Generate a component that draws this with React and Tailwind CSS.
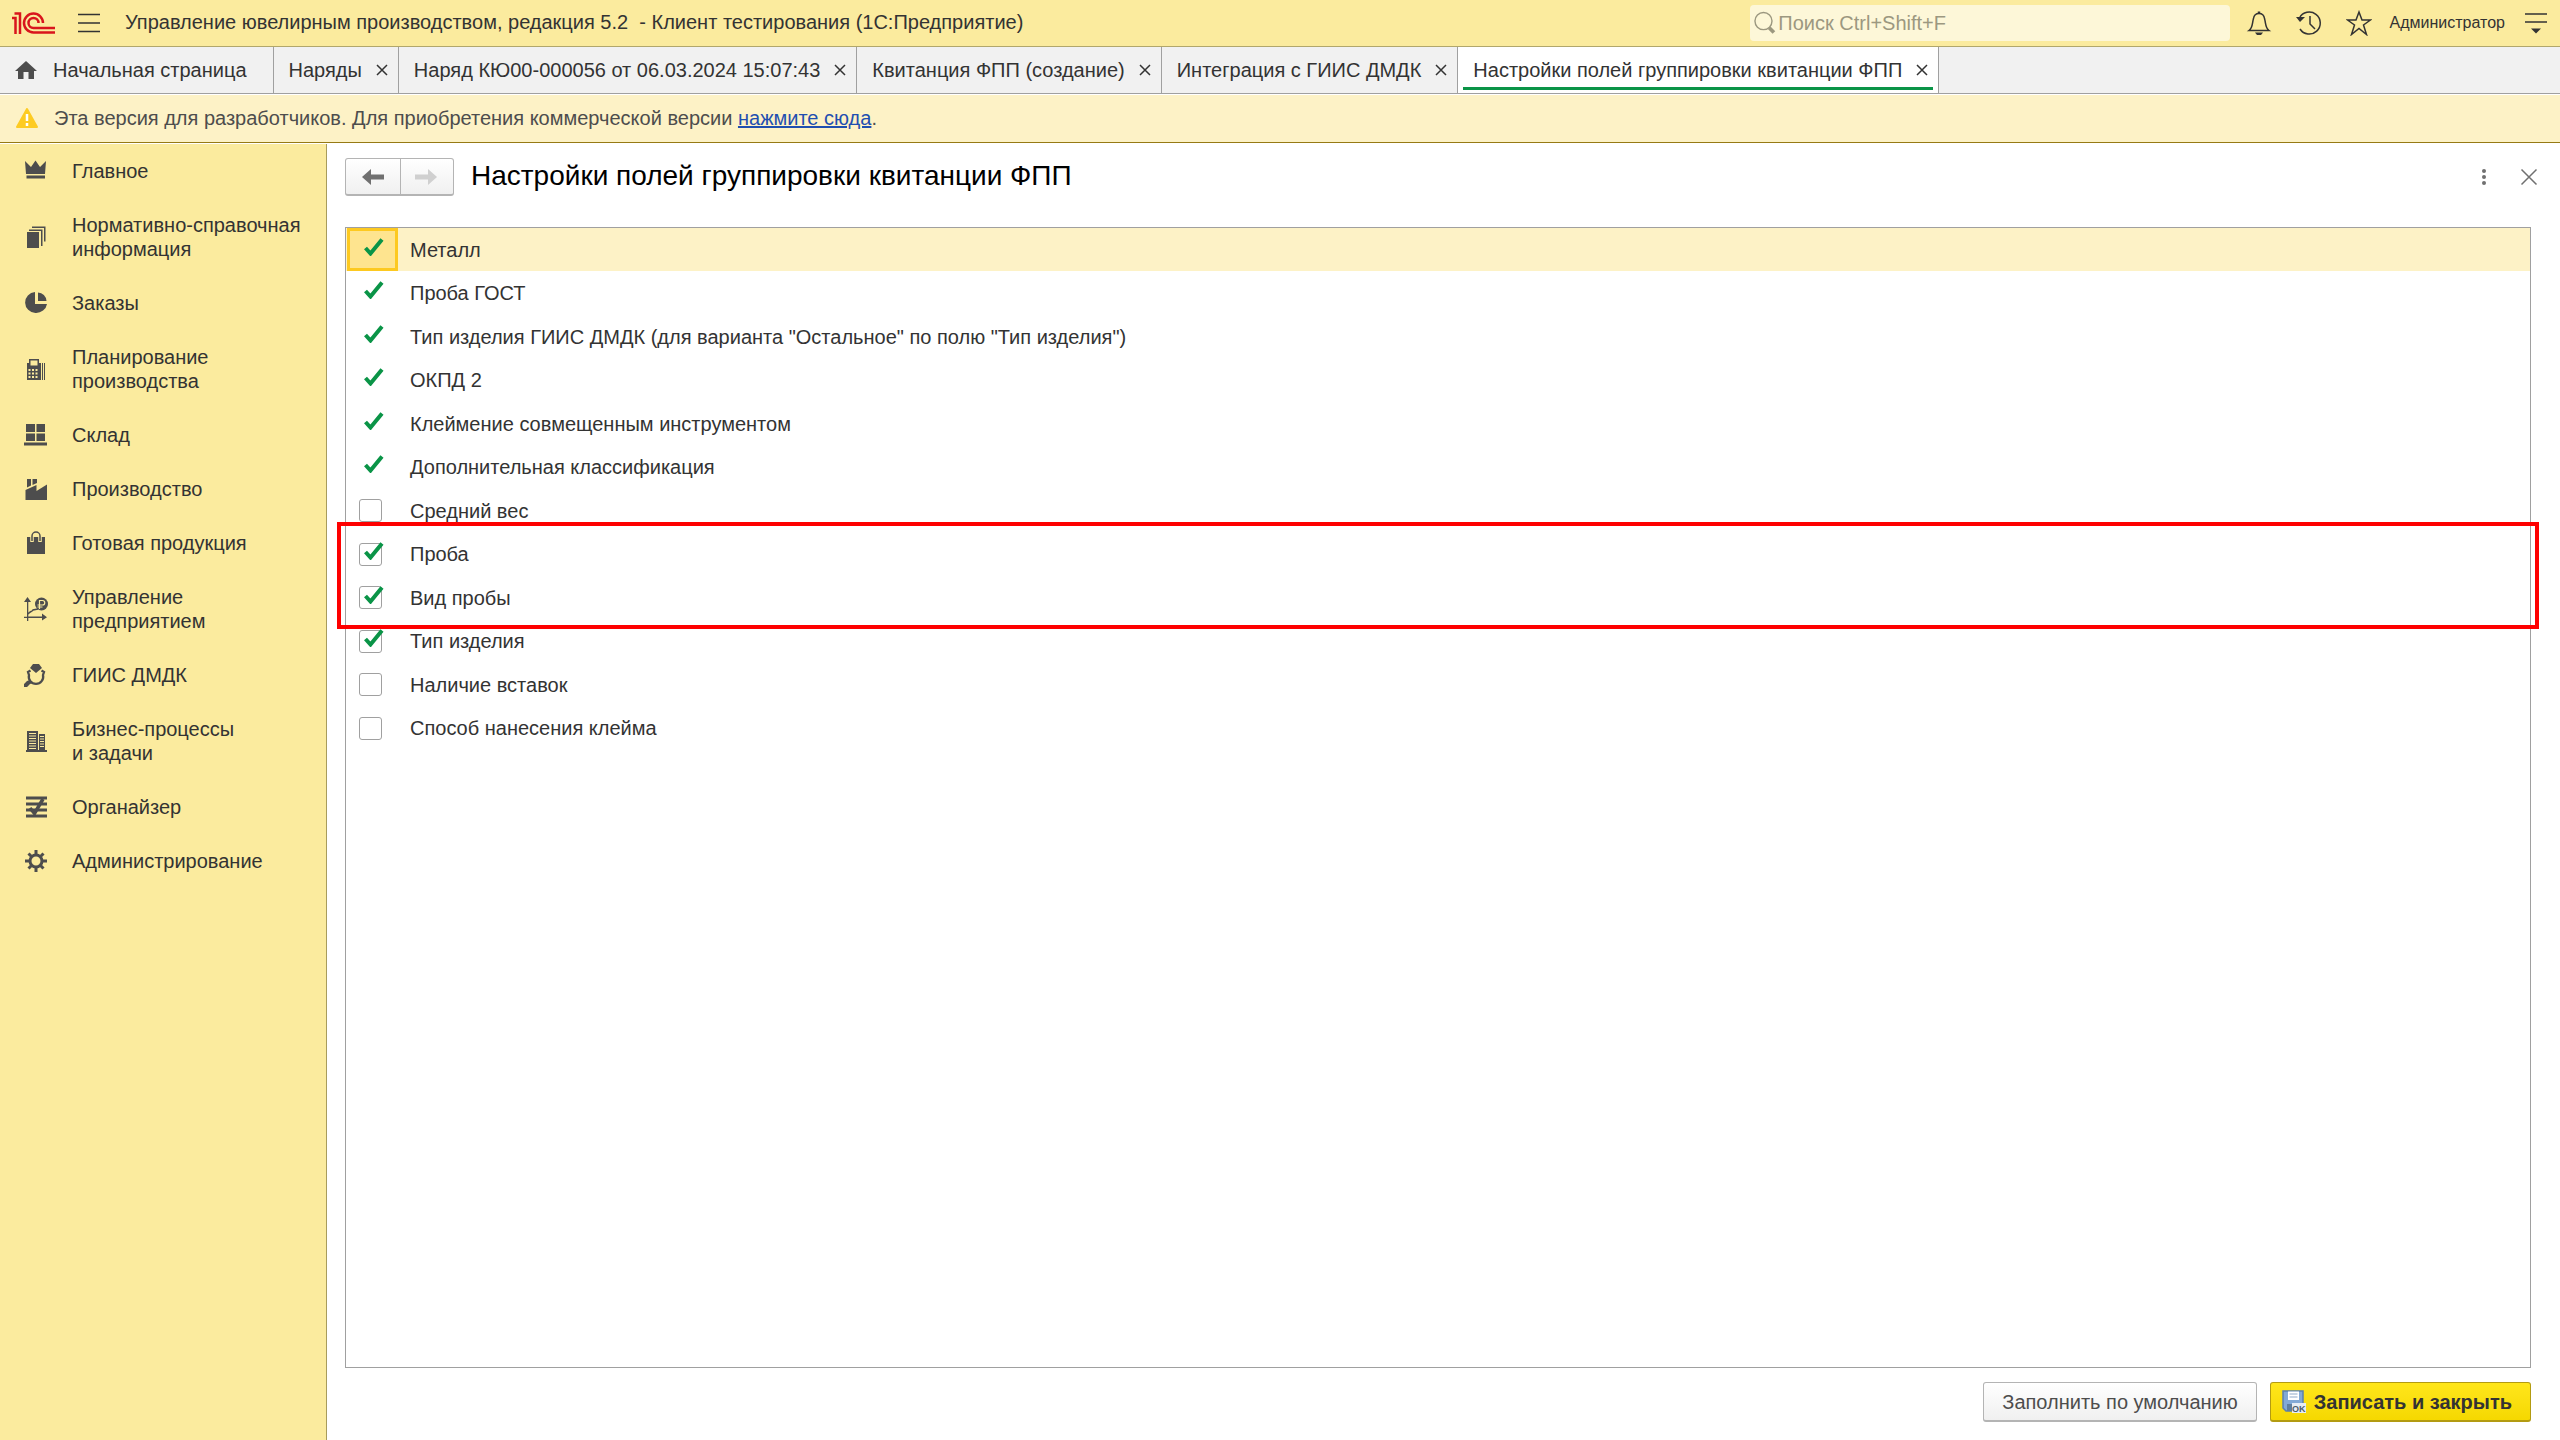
import { useState } from 'react'
import { clsx } from 'clsx'

const tabs = [
  { title: 'Наряды' },
  { title: 'Наряд КЮ00-000056 от 06.03.2024 15:07:43' },
  { title: 'Квитанция ФПП (создание)' },
  { title: 'Интеграция с ГИИС ДМДК' },
  { title: 'Настройки полей группировки квитанции ФПП', active: true }
]

const sections = [
  { label: 'Главное', icon: CrownIcon },
  { label: 'Нормативно-справочная\nинформация', icon: PagesIcon },
  { label: 'Заказы', icon: PieIcon },
  { label: 'Планирование\nпроизводства', icon: CalculatorIcon },
  { label: 'Склад', icon: WarehouseIcon },
  { label: 'Производство', icon: FactoryIcon },
  { label: 'Готовая продукция', icon: BagIcon },
  { label: 'Управление\nпредприятием', icon: FinanceIcon },
  { label: 'ГИИС ДМДК', icon: RingIcon },
  { label: 'Бизнес-процессы\nи задачи', icon: BuildingsIcon },
  { label: 'Органайзер', icon: OrganizerIcon },
  { label: 'Администрирование', icon: GearIcon }
]

// locked fields are always part of the grouping and have no box
const initialFields = [
  { name: 'Металл', checked: true, locked: true },
  { name: 'Проба ГОСТ', checked: true, locked: true },
  { name: 'Тип изделия ГИИС ДМДК (для варианта "Остальное" по полю "Тип изделия")', checked: true, locked: true },
  { name: 'ОКПД 2', checked: true, locked: true },
  { name: 'Клеймение совмещенным инструментом', checked: true, locked: true },
  { name: 'Дополнительная классификация', checked: true, locked: true },
  { name: 'Средний вес', checked: false },
  { name: 'Проба', checked: true },
  { name: 'Вид пробы', checked: true },
  { name: 'Тип изделия', checked: true },
  { name: 'Наличие вставок', checked: false },
  { name: 'Способ нанесения клейма', checked: false }
]

function SectionSvg({ children }) {
  return (
    <svg viewBox="0 0 24 24" className="size-6 shrink-0 fill-[#4d4d4d]" aria-hidden="true">
      {children}
    </svg>
  )
}

function CrownIcon() {
  return (
    <SectionSvg>
      <path d="M1 2l6 6 4.500-6.500L16 8l6-6-1 13H2zM2.500 16.500h18.500v3H2.500z" />
    </SectionSvg>
  )
}

function PagesIcon() {
  return (
    <SectionSvg>
      <path d="M3 7h12v16H3zM5 4.500h13.500V21H17V6H5zM8 1.500h13.500v15H20V3H8z" />
    </SectionSvg>
  )
}

function PieIcon() {
  return (
    <SectionSvg>
      <path d="M11 1v12h12A11 10.500 0 1 1 11 1z" />
      <path d="M14 1.500a9 9 0 0 1 8.500 8.500H14z" />
    </SectionSvg>
  )
}

function CalculatorIcon() {
  return (
    <SectionSvg>
      <path fillRule="evenodd" d="M5 2h10v4h2v17H3V6h2zM6.500 3.500v5h7v-5zM4.500 12v2h2v-2zM8 12v2h2v-2zM11.500 12v2h2v-2zM4.500 15.500v2h2v-2zM8 15.500v2h2v-2zM11.500 15.500v2h2v-2zM4.500 19v2h2v-2zM8 19v2h2v-2zM11.500 19v2h2v-2z" />
      <path d="M18 6h1v17h-1zM20 6h1v17h-1z" />
    </SectionSvg>
  )
}

function WarehouseIcon() {
  return (
    <SectionSvg>
      <path d="M2 1h9v8H2zM12.500 1H21v8h-8.500zM2 10.500h9V18H2zM12.500 10.500H21V18h-8.500zM0 19.500h23v3H0z" />
    </SectionSvg>
  )
}

function FactoryIcon() {
  return (
    <SectionSvg>
      <path d="M1.500 23V13l11-5v6L23 7.500V23zM3 2h4v6.500l-4 2zM8.500 2h4.500v4L8.500 8z" />
    </SectionSvg>
  )
}

function BagIcon() {
  return (
    <SectionSvg>
      <path d="M3 6h18v17H3z" />
      <path d="M8 11V5a4 4 0 0 1 8 0v6" fill="none" stroke="#fbeb9e" strokeWidth="3.500" />
      <path d="M8 10V5a4 4 0 0 1 8 0v5" fill="none" stroke="#4d4d4d" strokeWidth="1.500" />
    </SectionSvg>
  )
}

function FinanceIcon() {
  return (
    <SectionSvg>
      <path d="M3 5L0 5l3.500-5L7 5H4.300v14.500H18v-3l5 3.700-5 3.300v-2.500H4.300V24H3v-3H0v-1.300h3z" />
      <path d="M4 17c2-3 4-2 5-4l5-1" fill="none" stroke="#4d4d4d" strokeWidth="1.500" />
      <circle cx="17.500" cy="7" r="6.500" />
      <path d="M15.500 12V3.500h3a2 2 0 0 1 0 4.500H13.500M13.500 10h5" fill="none" stroke="#fbeb9e" strokeWidth="1.200" />
    </SectionSvg>
  )
}

function RingIcon() {
  return (
    <SectionSvg>
      <path d="M9 1h6l3 4-6 5-6-5z" />
      <path d="M6.500 7.500L4 9l1 3a7.200 7.200 0 1 0 14 0l1-3-2.500-1.500" fill="none" stroke="#4d4d4d" strokeWidth="2.300" />
      <path d="M6 17l3 3-3 1-3 3H0v-3l3-3z" />
    </SectionSvg>
  )
}

function BuildingsIcon() {
  return (
    <SectionSvg>
      <path fillRule="evenodd" d="M3 2h11v19h1V5h6v16h2v2H2v-2h1zM5 4v1h7V4zM5 6.500v1h7v-1zM5 9v1h7V9zM5 11.500v1h7v-1zM5 14v1h7v-1zM5 16.500v1h7v-1zM5 19v1h7v-1zM16 7v1h4V7zM16 9.500v1h4v-1zM16 12v1h4v-1zM16 14.500v1h4v-1zM16 17v1h4v-1z" />
    </SectionSvg>
  )
}

function OrganizerIcon() {
  return (
    <SectionSvg>
      <path d="M2 1.500h21v3H2zM2 7.500h21v3H2zM2 13.500h21v3H2zM2 19.500h21v3H2z" />
      <path d="M6 13l4.500 5.500L19 4" fill="none" stroke="#4d4d4d" strokeWidth="3.500" />
    </SectionSvg>
  )
}

function GearIcon() {
  return (
    <SectionSvg>
      <circle cx="12" cy="12" r="6" fill="none" stroke="#4d4d4d" strokeWidth="3" />
      <path
        d="M12 1v5M12 18v5M1 12h5M18 12h5M4.500 4.500L8 8M16 16l3.500 3.500M4.500 19.500L8 16M16 8l3.500-3.500"
        fill="none"
        stroke="#4d4d4d"
        strokeWidth="3"
      />
    </SectionSvg>
  )
}

function Logo() {
  return (
    <svg viewBox="0 0 44 22" className="h-[22px] w-11 fill-none stroke-[#d9151c]" strokeWidth="2.500" aria-label="1С">
      <path d="M1 6h3.500v16M3.500 1.500H9V22" />
      <path d="M32 11a9.500 9.500 0 1 0-9.500 9.500H44M27.500 11a5 5 0 1 0-5 5H44" />
    </svg>
  )
}

function CloseIcon({ className }) {
  return (
    <svg viewBox="0 0 12 12" className={clsx('fill-none', className)} aria-hidden="true">
      <path d="M1 1l10 10M11 1L1 11" />
    </svg>
  )
}

function TitleBar() {
  return (
    <header className="flex h-[47px] items-center border-b border-[#b1a76c] bg-[#fbeb9e] pr-[13px] pl-[11px]">
      <Logo />
      <button type="button" aria-label="Главное меню" className="ml-[23px]">
        <svg viewBox="0 0 22 20" className="h-5 w-[22px] stroke-[#333] stroke-[1.500]" aria-hidden="true">
          <path d="M0 1.500h22M0 10h22M0 18.500h22" />
        </svg>
      </button>
      <h1 className="ml-[25px] pb-[2px] whitespace-pre">
        Управление ювелирным производством, редакция 5.2  - Клиент тестирования (1С:Предприятие)
      </h1>
      <label className="ml-auto flex h-9 w-[480px] items-center rounded-sm bg-[#fdf7d8] pl-1">
        <svg viewBox="0 0 24 24" className="size-6 fill-none stroke-[#9c9880]" aria-hidden="true">
          <circle cx="10" cy="10" r="9" strokeWidth="1.500" />
          <path d="M16 17l5 5" strokeWidth="4" />
        </svg>
        <input
          type="search"
          aria-label="Поиск"
          placeholder="Поиск Ctrl+Shift+F"
          className="ml-[2px] w-full bg-transparent outline-none placeholder:text-[#9c9880]"
        />
      </label>
      <div className="ml-4 flex items-center gap-6 text-[#333]">
        <button type="button" aria-label="Уведомления">
          <svg viewBox="0 0 26 26" className="size-[26px] fill-none stroke-current stroke-[1.500]" aria-hidden="true">
            <path d="M3 20.500c4-3 3-7 4.500-12C8 5 10 3.500 13 3.500S18 5 18.500 8.500C20 13.500 19 17.500 23 20.500z" />
            <path d="M13 1.500v2" strokeWidth="2.500" />
            <path d="M9 22.500h8l-2 2.500h-4z" fill="currentColor" stroke="none" />
          </svg>
        </button>
        <button type="button" aria-label="История">
          <svg viewBox="0 0 26 26" className="size-[26px] fill-none stroke-current stroke-[1.500]" aria-hidden="true">
            <path d="M3.500 8A11 11 0 1 1 4 19" />
            <path d="M14 6v8l5 5" />
            <path d="M0 7l9 0-5 5z" fill="currentColor" stroke="none" />
          </svg>
        </button>
        <button type="button" aria-label="Избранное">
          <svg viewBox="0 0 26 26" className="size-[26px] fill-none stroke-current stroke-[1.500]" aria-hidden="true">
            <path d="M13 2l3 8h8.500l-7 5 3 9.500-7.500-6-7.500 6 3-9.500-7-5H10z" />
          </svg>
        </button>
      </div>
      <button type="button" className="ml-[18px] pb-px text-base text-[#333]">Администратор</button>
      <button type="button" aria-label="Сервис и настройки" className="ml-5">
        <svg viewBox="0 0 22 22" className="size-[22px] stroke-[#333] stroke-[1.500]" aria-hidden="true">
          <path d="M0 2h22M0 10h22" />
          <path d="M6 16.500h10l-5 5z" fill="#333" stroke="none" />
        </svg>
      </button>
    </header>
  )
}

function TabBar() {
  return (
    <nav className="flex h-[47px] border-b border-[#a0a0a0] bg-[#f1f1f1]">
      <button type="button" className="flex items-center border-r border-[#a0a0a0] pr-[26px] pl-[15px]">
        <svg viewBox="0 0 22 20" className="h-5 w-[22px] fill-[#4d4d4d]" aria-hidden="true">
          <path d="M11 1l11 10h-3v8h-5.500v-7h-5v7H3v-8H0z" />
        </svg>
        <span className="ml-4">Начальная страница</span>
      </button>
      {tabs.map((tab) => (
        <div
          key={tab.title}
          className={clsx('relative flex items-center border-r border-[#a0a0a0] pr-[10px] pl-[15px]', tab.active && 'bg-white')}
        >
          <button type="button">{tab.title}</button>
          <button type="button" aria-label={`Закрыть ${tab.title}`} className="ml-[14px]">
            <CloseIcon className="size-3 stroke-[#333] stroke-[1.500]" />
          </button>
          {tab.active && <span className="absolute inset-x-[5px] bottom-[3px] h-[3px] bg-[#0a9447]" />}
        </div>
      ))}
    </nav>
  )
}

function Notice() {
  return (
    <div className="mt-px flex h-12 items-center border-b border-[#967a14] bg-[#fdf2c6] pb-[2px] pl-4 text-[#4d4d4d]">
      <svg viewBox="0 0 22 20" className="h-5 w-[22px]" aria-hidden="true">
        <path d="M11 1l10 18H1z" fill="#fdcb23" stroke="#fdcb23" strokeWidth="2" strokeLinejoin="round" />
        <path d="M11 6v7M11 15v3" stroke="#fff" strokeWidth="2.500" />
      </svg>
      <p className="ml-4">
        Эта версия для разработчиков. Для приобретения коммерческой версии{' '}
        <a href="#buy" className="text-[#1f4fb0] underline decoration-2">нажмите сюда</a>.
      </p>
    </div>
  )
}

function Sidebar() {
  return (
    <nav className="w-[327px] shrink-0 border-r border-[#a89c5c] bg-[#fbeb9e]">
      {sections.map(({ label, icon: Icon }) => (
        <a key={label} href="#section" className="flex items-center gap-6 py-[15px] pl-6">
          <Icon />
          <span className="whitespace-pre-line">{label}</span>
        </a>
      ))}
    </nav>
  )
}

function FieldRow({ field, current, onToggle }) {
  return (
    <li className={clsx('pl-px odd:h-[43px] even:h-[44px]', current && 'bg-[#fdf2c6]')}>
      <label className="flex h-full items-center">
        <span
          className={clsx(
            'relative flex h-full w-[51px] items-center pl-3',
            current && 'bg-[#fee48f] outline-3 -outline-offset-3 outline-[#fdc920]'
          )}
        >
          <input
            type="checkbox"
            checked={field.checked}
            disabled={field.locked}
            onChange={onToggle}
            className={clsx('size-[23px] appearance-none rounded-[3px]', !field.locked && 'border border-[#a0a0a0] bg-white')}
          />
          {field.checked && (
            <svg viewBox="0 0 20 18" className="absolute top-[10px] left-[17px] h-[18px] w-5" aria-hidden="true">
              <path d="M1.500 10l5 5.500L18 1.500" fill="none" stroke="#0a9447" strokeWidth="4" />
            </svg>
          )}
        </span>
        <span className="ml-3">{field.name}</span>
      </label>
    </li>
  )
}

function SettingsForm() {
  const [fields, setFields] = useState(initialFields)

  const toggle = (name) =>
    setFields((prev) => prev.map((f) => (f.name === name ? { ...f, checked: !f.checked } : f)))

  return (
    <main className="flex flex-1 flex-col pt-[14px] pr-[29px] pb-[18px] pl-[18px]">
      <div className="flex h-[38px] items-center">
        <div className="flex h-full rounded-[3px] border border-b-2 border-[#b4b4b4] bg-linear-to-b from-white to-[#f0f0f0]">
          <button type="button" aria-label="Назад" className="w-[55px] border-r border-[#b4b4b4] pl-4">
            <svg viewBox="0 0 22 16" className="h-4 w-[22px] fill-[#707070]" aria-hidden="true">
              <path d="M0 8l9-8v5.500h13v5H9V16z" />
            </svg>
          </button>
          <button type="button" aria-label="Вперед" disabled className="w-[52px] pl-[14px]">
            <svg viewBox="0 0 22 16" className="h-4 w-[22px] fill-[#d0d0d0]" aria-hidden="true">
              <path d="M22 8l-9-8v5.500H0v5h13V16z" />
            </svg>
          </button>
        </div>
        <h2 className="ml-[17px] pb-[3px] text-[28px] text-black">Настройки полей группировки квитанции ФПП</h2>
        <button type="button" aria-label="Еще" className="ml-auto">
          <svg viewBox="0 0 6 18" className="h-[18px] w-[6px] fill-[#707070]" aria-hidden="true">
            <circle cx="3" cy="3" r="2" />
            <circle cx="3" cy="9" r="2" />
            <circle cx="3" cy="15" r="2" />
          </svg>
        </button>
        <button type="button" aria-label="Закрыть" className="-mr-[7px] ml-[33px]">
          <CloseIcon className="size-[18px] stroke-[#707070] stroke-1" />
        </button>
      </div>

      <div className="relative mt-[31px] flex-1 border border-[#a0a0a0]">
        <ul>
          {fields.map((field, i) => (
            <FieldRow key={field.name} field={field} current={i === 0} onToggle={() => toggle(field.name)} />
          ))}
        </ul>
        <div className="pointer-events-none absolute top-[294px] -right-[9px] -left-[9px] h-[107px] border-4 border-[#fe0000]" />
      </div>

      <div className="mt-[14px] flex justify-end gap-[13px]">
        <button
          type="button"
          className="h-10 rounded-[3px] border border-b-2 border-[#b4b4b4] bg-linear-to-b from-white to-[#f0f0f0] px-[18px] text-[#4d4d4d]"
        >
          Заполнить по умолчанию
        </button>
        <button
          type="button"
          className="flex h-10 items-center gap-2 rounded-[3px] border border-b-2 border-[#b39b12] bg-linear-to-b from-[#ffe61a] to-[#f5d800] pr-[18px] pl-[11px] font-bold"
        >
          <svg viewBox="0 0 24 24" className="size-6" aria-hidden="true">
            <path d="M1 1h20v20H4l-3-3z" fill="#82a9d6" stroke="#5b80ae" strokeWidth="1.500" />
            <path d="M6 1.500h11V10H6z" fill="#fff" />
            <path d="M7.500 4h8M7.500 7h8" stroke="#8fa9c9" />
            <path d="M5 14h6v7H5z" fill="#5f7f9f" />
            <path d="M10 13h14v10H10z" fill="#e6edf5" />
            <text x="10" y="22" fontSize="9" fontWeight="700" fill="#4c5c6c">OK</text>
          </svg>
          Записать и закрыть
        </button>
      </div>
    </main>
  )
}

export default function App() {
  return (
    <div className="flex min-h-screen flex-col bg-white font-['Liberation_Sans',Arial,sans-serif] text-[20px] leading-6 text-[#333]">
      <TitleBar />
      <TabBar />
      <Notice />
      <div className="mt-px flex flex-1">
        <Sidebar />
        <SettingsForm />
      </div>
    </div>
  )
}
